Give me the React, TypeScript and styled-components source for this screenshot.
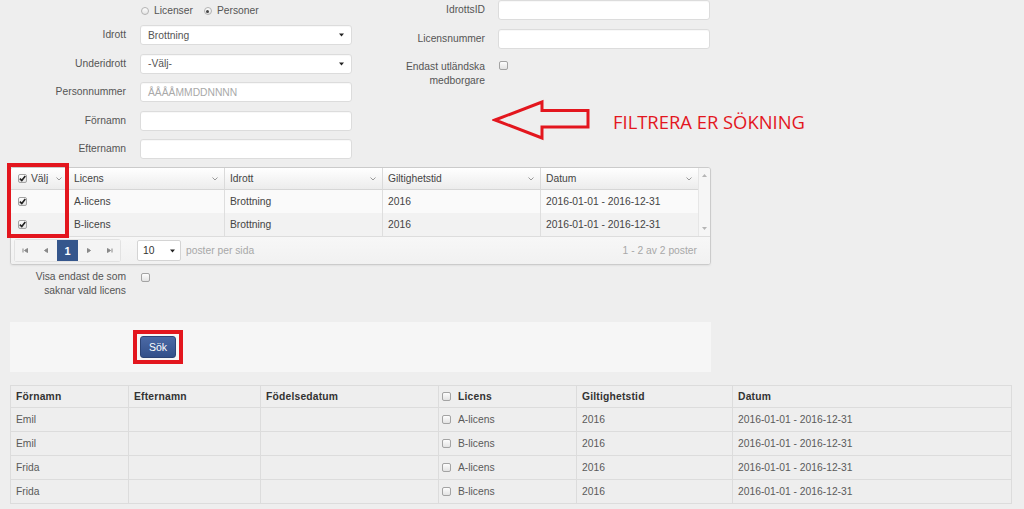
import React from "react";
import styled, { createGlobalStyle } from "styled-components";

const RED = "#e3161e";

const Global = createGlobalStyle`
  html, body { margin: 0; padding: 0; background: #eeeeee; }
  body {
    font-family: "Liberation Sans", Arial, sans-serif;
    font-size: 10.3px;
    color: #555;
  }
  * { box-sizing: border-box; }
`;

const Page = styled.div`
  width: 1024px;
  height: 509px;
  overflow: hidden;
  padding-left: 10px;
`;

const FilterArea = styled.div`
  display: flex;
  gap: 8px;
  height: 159px;
  margin-bottom: 8px;
`;

const LeftCol = styled.div`
  width: 342px;
  display: flex;
  flex-direction: column;
`;

const RightCol = styled.div`
  width: 350px;
  display: flex;
  flex-direction: column;
`;

const RadioRow = styled.div`
  height: 25px;
  padding: 4px 0 0 131px;
  display: flex;
  align-items: flex-start;
  gap: 11px;
  line-height: 14px;
`;

const RadioItem = styled.label`
  display: inline-flex;
  align-items: center;
  gap: 5px;
  color: #555;
`;

const RadioCircle = styled.span<{ $on?: boolean }>`
  width: 8px;
  height: 8px;
  border-radius: 50%;
  border: 1px solid #b3b3b3;
  background: linear-gradient(#fdfdfd, #e4e4e4);
  display: inline-flex;
  align-items: center;
  justify-content: center;
  &::after {
    content: "";
    width: 3px;
    height: 3px;
    border-radius: 50%;
    background: ${(p) => (p.$on ? "#444" : "transparent")};
  }
`;

const FormGrid = styled.div<{ $label: number; $gap: number; $rowGap: number }>`
  display: grid;
  grid-template-columns: ${(p) => p.$label}px 212px;
  column-gap: ${(p) => p.$gap}px;
  row-gap: ${(p) => p.$rowGap}px;
  grid-auto-rows: minmax(20px, auto);
  align-items: center;
`;

const Label = styled.div`
  text-align: right;
  line-height: 14px;
  color: #555;
`;

const TopLabel = styled(Label)`
  align-self: start;
  margin-top: 2px;
`;

const Field = styled.div`
  height: 20px;
  background: #fff;
  border: 1px solid #dcdcdc;
  border-radius: 3px;
  padding: 0 7px;
  display: flex;
  align-items: center;
  justify-content: space-between;
  color: #555;
  box-shadow: inset 0 1px 1px rgba(0, 0, 0, 0.03);
`;

const Placeholder = styled.span`
  color: #a9a9a9;
`;

const Caret = () => (
  <svg width="5" height="4" viewBox="0 0 5 4">
    <path d="M0 0.5 L5 0.5 L2.5 3.5 Z" fill="#222" />
  </svg>
);

const Box = styled.span`
  width: 9px;
  height: 9px;
  border: 1px solid #a3a3a3;
  border-radius: 2px;
  background: linear-gradient(#fdfdfd, #e3e3e3);
  display: inline-flex;
  align-items: center;
  justify-content: center;
  flex: none;
`;

const Check = ({ on }: { on?: boolean }) => (
  <Box>
    {on && (
      <svg width="7" height="7" viewBox="0 0 7 7">
        <path d="M0.8 3.6 L2.8 5.6 L6.3 1" stroke="#222" strokeWidth="1.6" fill="none" />
      </svg>
    )}
  </Box>
);

const CheckCell = styled.div`
  align-self: start;
  padding: 3px 0 0 1px;
`;

const EndastRow = styled.div`
  display: contents;
`;

const Callout = styled.div`
  display: flex;
  align-items: center;
  gap: 21px;
  margin: 11px 0 0 132px;
  width: 330px;
  & > svg {
    flex: none;
  }
`;

const CalloutText = styled.span`
  font-family: "Open Sans", "Liberation Sans", sans-serif;
  font-size: 18.4px;
  color: ${RED};
  white-space: nowrap;
  flex: none;
  padding-top: 3px;
`;

const Arrow = () => (
  <svg width="100" height="42" viewBox="0 0 100 42">
    <path
      d="M3 21 L50 3 L50 11.5 L96 11.5 L96 28 L50 28 L50 39 Z"
      fill="none"
      stroke={RED}
      strokeWidth="3"
      strokeLinejoin="miter"
    />
  </svg>
);

/* ---------- Grid ---------- */

const GridWrap = styled.div`
  position: relative;
  width: 701px;
`;

const Grid = styled.div`
  border: 1px solid #cbcbcb;
  border-radius: 3px;
  background: #f9f9f9;
  overflow: hidden;
  box-shadow: 0 1px 2px rgba(0, 0, 0, 0.06);
`;

const GridBody = styled.div`
  display: flex;
`;

const GridMain = styled.div`
  display: grid;
  grid-template-columns: 57px 156px 158px 158px 158px;
`;

const HeadCell = styled.div<{ $first?: boolean }>`
  height: 22px;
  display: flex;
  align-items: center;
  justify-content: space-between;
  gap: 4px;
  padding: 0 6px 0 ${(p) => (p.$first ? 7 : 5)}px;
  background: linear-gradient(#ffffff, #ececec);
  border-bottom: 1px solid #d6d6d6;
  border-left: ${(p) => (p.$first ? "none" : "1px solid #dadada")};
  color: #444;
`;

const HeadTitle = styled.span`
  display: inline-flex;
  align-items: center;
  gap: 4px;
`;

const Chevron = () => (
  <svg width="6" height="4" viewBox="0 0 6 4">
    <path d="M0.5 0.5 L3 3 L5.5 0.5" stroke="#999" strokeWidth="1" fill="none" />
  </svg>
);

const Cell = styled.div<{ $alt?: boolean; $first?: boolean }>`
  height: 23px;
  display: flex;
  align-items: center;
  padding: 0 6px 0 ${(p) => (p.$first ? 7 : 5)}px;
  background: ${(p) => (p.$alt ? "#f2f2f2" : "#fafafa")};
  border-left: ${(p) => (p.$first ? "none" : "1px solid #dedede")};
  color: #444;
`;

const ScrollBar = styled.div`
  width: 12px;
  border-left: 1px solid #e6e6e6;
  background: #f6f6f6;
  display: flex;
  flex-direction: column;
  justify-content: space-between;
  align-items: center;
  padding: 6px 0 6px;
`;

const Tri = ({ up }: { up?: boolean }) => (
  <svg width="5" height="3" viewBox="0 0 5 3">
    <path d={up ? "M0 3 L2.5 0 L5 3 Z" : "M0 0 L5 0 L2.5 3 Z"} fill="#b5b5b5" />
  </svg>
);

const Pager = styled.div`
  height: 28px;
  border-top: 1px solid #dddddd;
  background: linear-gradient(#f7f7f7, #f1f1f1);
  display: flex;
  align-items: center;
  padding: 0 13px 0 4px;
`;

const PagerGroup = styled.div`
  display: flex;
  border-radius: 2px;
  box-shadow: 0 0 0 1px #e2e2e2;
`;

const PageBtn = styled.div<{ $active?: boolean }>`
  width: 21px;
  height: 21px;
  display: flex;
  align-items: center;
  justify-content: center;
  background: ${(p) => (p.$active ? "#35568c" : "#f4f4f4")};
  color: ${(p) => (p.$active ? "#fff" : "#888")};
  font-weight: ${(p) => (p.$active ? "bold" : "normal")};
  font-size: 11px;
`;

const SizeSelect = styled.div`
  margin-left: 17px;
  width: 44px;
  height: 21px;
  background: #fff;
  border: 1px solid #d4d4d4;
  border-radius: 2px;
  padding: 0 5px;
  display: flex;
  align-items: center;
  justify-content: space-between;
  color: #333;
`;

const Muted = styled.span<{ $push?: boolean }>`
  color: #a8a8a8;
  margin-left: ${(p) => (p.$push ? "auto" : "5px")};
`;

const PagerIcon = ({ kind }: { kind: "first" | "prev" | "next" | "last" }) => {
  const d: Record<string, string> = {
    first: "M1 1.5 L1 5.5 M5.5 1.5 L2.5 3.5 L5.5 5.5 Z",
    prev: "M4.5 1.5 L1.5 3.5 L4.5 5.5 Z",
    next: "M2.5 1.5 L5.5 3.5 L2.5 5.5 Z",
    last: "M6 1.5 L6 5.5 M1.5 1.5 L4.5 3.5 L1.5 5.5 Z",
  };
  return (
    <svg width="7" height="7" viewBox="0 0 7 7">
      <path d={d[kind]} fill="#888" stroke="#888" strokeWidth="1" />
    </svg>
  );
};

const Highlight = styled.div`
  position: absolute;
  left: -3px;
  top: -4px;
  width: 62px;
  height: 75px;
  border: 4px solid ${RED};
  pointer-events: none;
`;

/* ---------- Option + panel ---------- */

const OptionRow = styled.div`
  margin-top: 5px;
  display: grid;
  grid-template-columns: 116px auto;
  column-gap: 14px;
  height: 28px;
`;

const Panel = styled.div`
  margin-top: 24px;
  width: 701px;
  height: 50px;
  background: #f6f6f6;
  display: flex;
  align-items: center;
  padding-left: 123px;
`;

const SearchFrame = styled.div`
  border: 4px solid ${RED};
  padding: 2px 3px;
  display: inline-flex;
`;

const SearchButton = styled.button`
  width: 36px;
  height: 22px;
  border: 1px solid #2c4476;
  border-radius: 3px;
  background: linear-gradient(#4b69a5, #33508a);
  color: #fff;
  font-family: "Liberation Sans", Arial, sans-serif;
  font-size: 10.5px;
  padding: 0;
`;

/* ---------- Result table ---------- */

const Table = styled.table`
  margin-top: 13px;
  width: 1001px;
  border-collapse: collapse;
  table-layout: fixed;
  border: 1px solid #dddddd;
`;

const Th = styled.th`
  height: 22px;
  padding: 0 5px;
  text-align: left;
  font-weight: bold;
  color: #333;
  border: 1px solid #dcdcdc;
  letter-spacing: 0.2px;
`;

const Td = styled.td`
  height: 24px;
  padding: 0 5px;
  color: #5a5a5a;
  border: 1px solid #dcdcdc;
`;

const LicCell = styled.div<{ $head?: boolean }>`
  display: flex;
  align-items: center;
  gap: 7px;
  margin-left: -2px;
  color: ${(p) => (p.$head ? "#333" : "#5a5a5a")};
`;

const rows = [
  ["Emil", "A-licens"],
  ["Emil", "B-licens"],
  ["Frida", "A-licens"],
  ["Frida", "B-licens"],
];

export default function App() {
  return (
    <Page>
      <Global />
      <FilterArea>
        <LeftCol>
          <RadioRow>
            <RadioItem>
              <RadioCircle />
              Licenser
            </RadioItem>
            <RadioItem>
              <RadioCircle $on />
              Personer
            </RadioItem>
          </RadioRow>
          <FormGrid $label={116} $gap={14} $rowGap={8.5}>
            <Label>Idrott</Label>
            <Field>
              Brottning
              <Caret />
            </Field>
            <Label>Underidrott</Label>
            <Field>
              -Välj-
              <Caret />
            </Field>
            <Label>Personnummer</Label>
            <Field>
              <Placeholder>ÅÅÅÅMMDDNNNN</Placeholder>
            </Field>
            <Label>Förnamn</Label>
            <Field />
            <Label>Efternamn</Label>
            <Field />
          </FormGrid>
        </LeftCol>
        <RightCol>
          <FormGrid $label={125} $gap={13} $rowGap={9}>
            <Label>IdrottsID</Label>
            <Field />
            <Label>Licensnummer</Label>
            <Field />
            <EndastRow>
              <TopLabel>
                Endast utländska
                <br />
                medborgare
              </TopLabel>
              <CheckCell>
                <Check />
              </CheckCell>
            </EndastRow>
          </FormGrid>
          <Callout>
            <Arrow />
            <CalloutText>FILTRERA ER SÖKNING</CalloutText>
          </Callout>
        </RightCol>
      </FilterArea>

      <GridWrap>
        <Grid>
          <GridBody>
            <GridMain>
              <HeadCell $first>
                <HeadTitle>
                  <Check on />
                  Välj
                </HeadTitle>
                <Chevron />
              </HeadCell>
              <HeadCell>
                Licens
                <Chevron />
              </HeadCell>
              <HeadCell>
                Idrott
                <Chevron />
              </HeadCell>
              <HeadCell>
                Giltighetstid
                <Chevron />
              </HeadCell>
              <HeadCell>
                Datum
                <Chevron />
              </HeadCell>

              {["A-licens", "B-licens"].map((lic, i) => (
                <React.Fragment key={lic}>
                  <Cell $first $alt={i === 1}>
                    <Check on />
                  </Cell>
                  <Cell $alt={i === 1}>{lic}</Cell>
                  <Cell $alt={i === 1}>Brottning</Cell>
                  <Cell $alt={i === 1}>2016</Cell>
                  <Cell $alt={i === 1}>2016-01-01 - 2016-12-31</Cell>
                </React.Fragment>
              ))}
            </GridMain>
            <ScrollBar>
              <Tri up />
              <Tri />
            </ScrollBar>
          </GridBody>
          <Pager>
            <PagerGroup>
              <PageBtn>
                <PagerIcon kind="first" />
              </PageBtn>
              <PageBtn>
                <PagerIcon kind="prev" />
              </PageBtn>
              <PageBtn $active>1</PageBtn>
              <PageBtn>
                <PagerIcon kind="next" />
              </PageBtn>
              <PageBtn>
                <PagerIcon kind="last" />
              </PageBtn>
            </PagerGroup>
            <SizeSelect>
              10
              <Caret />
            </SizeSelect>
            <Muted>poster per sida</Muted>
            <Muted $push>1 - 2 av 2 poster</Muted>
          </Pager>
        </Grid>
        <Highlight />
      </GridWrap>

      <OptionRow>
        <Label>
          Visa endast de som
          <br />
          saknar vald licens
        </Label>
        <CheckCell>
          <Check />
        </CheckCell>
      </OptionRow>

      <Panel>
        <SearchFrame>
          <SearchButton>Sök</SearchButton>
        </SearchFrame>
      </Panel>

      <Table>
        <colgroup>
          <col style={{ width: 118 }} />
          <col style={{ width: 132 }} />
          <col style={{ width: 178 }} />
          <col style={{ width: 138 }} />
          <col style={{ width: 156 }} />
          <col style={{ width: 279 }} />
        </colgroup>
        <thead>
          <tr>
            <Th>Förnamn</Th>
            <Th>Efternamn</Th>
            <Th>Födelsedatum</Th>
            <Th>
              <LicCell $head>
                <Check />
                Licens
              </LicCell>
            </Th>
            <Th>Giltighetstid</Th>
            <Th>Datum</Th>
          </tr>
        </thead>
        <tbody>
          {rows.map(([name, lic], i) => (
            <tr key={i}>
              <Td>{name}</Td>
              <Td />
              <Td />
              <Td>
                <LicCell>
                  <Check />
                  {lic}
                </LicCell>
              </Td>
              <Td>2016</Td>
              <Td>2016-01-01 - 2016-12-31</Td>
            </tr>
          ))}
        </tbody>
      </Table>
    </Page>
  );
}
